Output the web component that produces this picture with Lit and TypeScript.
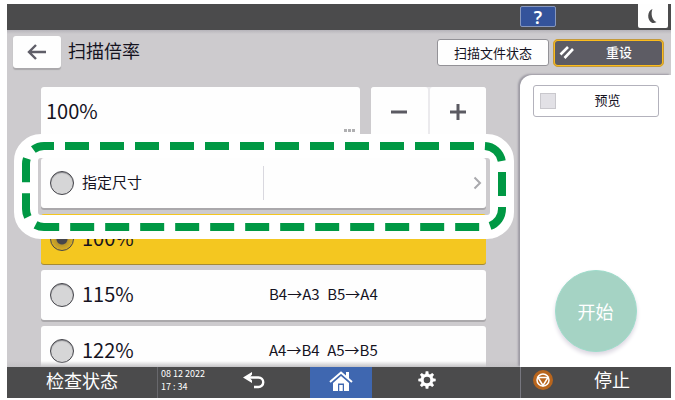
import { LitElement, html, css, svg, nothing } from "lit";
import { customElement, property } from "lit/decorators.js";

interface Ratio {
  label: string;
  note?: string;
  more?: boolean;
  checked?: boolean;
}

const RATIOS: Ratio[] = [
  { label: "指定尺寸", more: true },
  { label: "100%", checked: true },
  { label: "115%", note: "B4→A3\u2002B5→A4" },
  { label: "122%", note: "A4→B4\u2002A5→B5" },
];

const GEAR_TEETH = [0, 45, 90, 135, 180, 225, 270, 315];

@customElement("ratio-row")
export class RatioRow extends LitElement {
  @property({ attribute: false }) ratio!: Ratio;

  static styles = css`
    :host {
      display: block;
    }
    .row {
      box-sizing: border-box;
      display: grid;
      grid-template-columns: 222px 1fr auto;
      align-items: center;
      height: 50px;
      padding-right: 4px;
      border-radius: 3px;
      background: #fefefe;
      box-shadow: 0 2px 0 #aaa8ab;
      color: #15131f;
    }
    .selected {
      background: #f4c720;
      box-shadow: 0 1px 0 #a48a35;
    }
    .main {
      display: flex;
      align-items: center;
      gap: 8px;
      padding-left: 9px;
    }
    .radio {
      appearance: none;
      box-sizing: border-box;
      flex: none;
      width: 24px;
      height: 24px;
      margin: 0;
      border: 1px solid #45454b;
      border-radius: 50%;
      background: #d6d6d7;
      box-shadow: inset 0 1px 1px #8a8a8e;
    }
    .radio:checked {
      background: radial-gradient(circle, #45454b 5px, #b8952c 6px, #d8ae22 11px);
    }
    .number,
    .name,
    .note {
      padding-bottom: 2px;
      line-height: 24px;
    }
    .number {
      font-size: 20px;
    }
    .name {
      font-size: 15px;
    }
    .note {
      padding-left: 6px;
      font-size: 15px;
      white-space: pre;
    }
    .divided {
      height: 34px;
      padding: 0;
      border-left: 1px solid #d9d8df;
    }
    .chevron {
      display: block;
      width: 9px;
      height: 14px;
    }
  `;

  render() {
    const r = this.ratio;
    return html`
      <label class="row ${r.checked ? "selected" : ""}">
        <span class="main">
          <input class="radio" type="radio" name="ratio" .checked=${!!r.checked} />
          <span class=${r.more ? "name" : "number"}>${r.label}</span>
        </span>
        <span class="note ${r.more ? "divided" : ""}">${r.note ?? ""}</span>
        ${r.more
          ? html`<svg class="chevron" viewBox="0 0 9 14" aria-hidden="true">
              <path d="M1.5 1.5L7 7L1.5 12.5" fill="none" stroke="#a9a9ad" stroke-width="2" />
            </svg>`
          : nothing}
      </label>
    `;
  }
}

@customElement("app-root")
export class AppRoot extends LitElement {
  static styles = css`
    :host {
      box-sizing: border-box;
      display: flex;
      flex-direction: column;
      height: 100vh;
      padding: 4px 4px 2px 7px;
      overflow: hidden;
      background: #fff;
      color: #15131f;
      font-family: "Noto Sans CJK SC", sans-serif;
      font-size: 16px;
    }
    button {
      box-sizing: border-box;
      display: flex;
      align-items: center;
      justify-content: center;
      margin: 0;
      padding: 0;
      border: 0;
      background: #fefefe;
      color: inherit;
      font: inherit;
    }
    svg {
      display: block;
      flex: none;
    }
    .status {
      display: flex;
      flex: none;
      justify-content: flex-end;
      align-items: flex-start;
      gap: 82px;
      height: 26px;
      padding-right: 3px;
      background: #4b4b4c;
    }
    .help {
      width: 36px;
      height: 21px;
      margin-top: 2px;
      border: 1px solid #8797bd;
      border-radius: 2px;
      background: #34539b;
      color: #fff;
      font: 600 18px/18px "Noto Sans", sans-serif;
    }
    .sleep {
      width: 30px;
      height: 24px;
      border-radius: 0 0 2px 2px;
    }
    .header {
      display: flex;
      flex: none;
      align-items: center;
      height: 45px;
      padding: 0 7px 0 6px;
      background: linear-gradient(#b6b4ba, #cdcbce 4px);
    }
    .back {
      width: 48px;
      height: 32px;
      margin-bottom: 2px;
      border-radius: 3px;
      box-shadow: 0 2px 1px #aaa8ab;
    }
    .title {
      flex: 1;
      margin: 0;
      padding: 0 0 6px 7px;
      font-size: 18px;
      font-weight: 400;
      line-height: 26px;
    }
    .files {
      width: 112px;
      height: 27px;
      margin-right: 4px;
      border: 1px solid #939297;
      border-radius: 3px;
      font-size: 13px;
    }
    .reset {
      justify-content: flex-start;
      gap: 32px;
      width: 111px;
      height: 28px;
      padding-left: 4px;
      border: 2px solid #fcbc1c;
      border-radius: 5px;
      background: #5d5c64;
      color: #fff;
      font-size: 13px;
      font-weight: 500;
      outline: 1px solid #c39a3c;
      outline-offset: -1px;
    }
    .body {
      display: grid;
      flex: 1;
      grid-template-rows: minmax(0, 1fr);
      grid-template-columns: 1fr 151px;
      min-height: 0;
      background: #cdcbce;
    }
    .settings {
      display: flex;
      flex-direction: column;
      gap: 15px;
      position: relative;
      min-width: 0;
      min-height: 0;
      padding: 12px 34px 0;
      overflow: hidden;
    }
    .settings::after {
      content: "";
      position: absolute;
      right: 0;
      bottom: 0;
      left: 0;
      height: 6px;
      background: linear-gradient(#cdcbce00, #c3c2c5);
    }
    .entry {
      display: flex;
      flex: none;
      gap: 11px;
      height: 56px;
    }
    .value {
      display: flex;
      flex: 1;
      justify-content: space-between;
      padding: 0 5px;
      border-radius: 3px;
      background: #fefefe;
    }
    .amount {
      font-size: 20px;
      line-height: 48px;
    }
    .dots {
      align-self: flex-end;
      padding-bottom: 11px;
    }
    .stepper {
      display: grid;
      grid-template-columns: 1fr 1fr;
      gap: 2px;
      width: 115px;
      border-radius: 3px;
      background: #ebeaed;
    }
    .step {
      padding-bottom: 6px;
      border-radius: 3px;
    }
    .list {
      display: flex;
      flex-direction: column;
      gap: 6px;
    }
    .focus {
      position: relative;
      z-index: 1;
    }
    .ring {
      position: absolute;
      top: -24px;
      left: -27px;
      width: calc(100% + 55px);
      height: 106px;
      pointer-events: none;
    }
    .halo,
    .dash {
      x: 12px;
      y: 12px;
      width: calc(100% - 24px);
      height: 81px;
      fill: none;
    }
    .halo {
      stroke: #fff;
      stroke-width: 24px;
    }
    .dash {
      stroke: #009844;
      stroke-width: 8px;
      stroke-dasharray: 24px 11px;
      stroke-dashoffset: 14px;
    }
    .side {
      display: flex;
      flex-direction: column;
      align-items: center;
      justify-content: space-between;
      position: relative;
      z-index: 1;
      box-sizing: border-box;
      padding: 10px 0 15px;
      border-radius: 12px 0 0 0;
      background: #fff;
      box-shadow: -2px -1px 2px #9c9aa3;
      clip-path: inset(-3px 0 0 -5px);
    }
    .preview {
      box-sizing: border-box;
      display: flex;
      align-items: center;
      gap: 39px;
      width: 126px;
      height: 32px;
      padding: 0 0 1px 6px;
      border: 1px solid #b3b2bc;
      border-radius: 3px;
      font-size: 13px;
      line-height: 18px;
    }
    .caption {
      padding-bottom: 2px;
    }
    .check {
      appearance: none;
      box-sizing: border-box;
      width: 16px;
      height: 16px;
      margin: 0;
      border: 1px solid #c9c8cd;
      background: #e2e1e6;
    }
    .start {
      width: 82px;
      height: 82px;
      border: 1px solid #9fdccb;
      border-radius: 50%;
      background: #a5d3c4;
      box-shadow: 0 3px 4px #dcd8e2;
      color: #fff;
      font-size: 18px;
    }
    .footer {
      display: grid;
      flex: none;
      grid-template-rows: minmax(0, 1fr);
      grid-template-columns: 150px 57px 96px 62px 110px 1fr 151px;
      height: 31px;
      background: #4b4b4c;
      color: #fff;
    }
    .footer button {
      background: none;
      line-height: 22px;
    }
    .footer .job {
      padding-bottom: 6px;
      font-size: 18px;
    }
    .footer .home {
      padding-bottom: 4px;
      background: #3f67b0;
    }
    .clock {
      display: flex;
      flex-direction: column;
      padding-left: 3px;
      border-left: 1px solid #68686c;
      font-size: 9px;
      line-height: 13px;
      white-space: nowrap;
    }
    .footer .nav {
      padding-bottom: 5px;
    }
    .footer .undo {
      padding-right: 16px;
    }
    .footer .stop {
      grid-column: 7;
      justify-content: flex-start;
      gap: 41px;
      padding: 0 0 5px 12px;
      border-left: 1px solid #77777f;
      font-size: 18px;
    }
  `;

  render() {
    return html`
      <header class="status">
        <button class="help">?</button>
        <button class="sleep" aria-label="睡眠">
          <svg width="12" height="16" viewBox="0 0 12 16">
            <path d="M5.500 1C0 3 0 12 4.500 14.500C6 15.400 8 15 9.500 14C5 12.500 3.500 5.500 5.500 1Z" fill="#4b4b4c" />
          </svg>
        </button>
      </header>

      <div class="header">
        <button class="back" aria-label="返回">
          <svg width="20" height="16" viewBox="0 0 20 16">
            <path d="M9 1L2 8L9 15M2 8H19" fill="none" stroke="#5f5e68" stroke-width="2.400" />
          </svg>
        </button>
        <h1 class="title">扫描倍率</h1>
        <button class="files">扫描文件状态</button>
        <button class="reset">
          <svg width="15" height="13" viewBox="0 0 15 13">
            <path d="M1.500 8.500L9 1M5.500 12L14 3" fill="none" stroke="#fff" stroke-width="2.600" />
          </svg>
          <span class="caption">重设</span>
        </button>
      </div>

      <main class="body">
        <section class="settings">
          <div class="entry">
            <div class="value">
              <span class="amount">100%</span>
              <svg class="dots" width="11" height="3" viewBox="0 0 11 3">
                <path d="M0 0h3v3h-3zM4 0h3v3h-3zM8 0h3v3h-3z" fill="#b0b0b2" />
              </svg>
            </div>
            <div class="stepper">
              <button class="step" aria-label="减">
                <svg width="16" height="16" viewBox="0 0 16 16">
                  <path d="M0 8H16" stroke="#5b5a62" stroke-width="3" />
                </svg>
              </button>
              <button class="step" aria-label="加">
                <svg width="16" height="16" viewBox="0 0 16 16">
                  <path d="M0 8H16M8 0V16" stroke="#5b5a62" stroke-width="3" />
                </svg>
              </button>
            </div>
          </div>
          <div class="list">
            ${RATIOS.map((r) =>
              r.more
                ? html`<div class="focus">
                    <ratio-row .ratio=${r}></ratio-row>
                    <svg class="ring" aria-hidden="true">
                      <rect class="halo" rx="15" />
                      <rect class="dash" rx="18" />
                    </svg>
                  </div>`
                : html`<ratio-row .ratio=${r}></ratio-row>`,
            )}
          </div>
        </section>

        <aside class="side">
          <label class="preview">
            <input class="check" type="checkbox" />
            <span class="caption">预览</span>
          </label>
          <button class="start">开始</button>
        </aside>
      </main>

      <footer class="footer">
        <button class="job">检查状态</button>
        <div class="clock"><span>08 12 2022</span><span>17 : 34</span></div>
        <button class="nav undo" aria-label="后退">
          <svg width="22" height="17" viewBox="0 0 22 17">
            <path d="M6 5.500H15.500A4.700 4.700 0 0 1 15.500 15H11" fill="none" stroke="#fff" stroke-width="2.400" />
            <path d="M0 5.500L9 0V2.500L6.500 5.500L9 8.500V11Z" fill="#fff" />
          </svg>
        </button>
        <button class="home" aria-label="主页">
          <svg width="24" height="20" viewBox="0 0 24 20">
            <path d="M1 11L12 1.500L23 11" fill="none" stroke="#fff" stroke-width="2" />
            <path d="M17 1H20V8L17 5Z" fill="#fff" />
            <path d="M12 5L20 12V20H4V12ZM9 12.500V20H10.500V14H13.500V20H15V12.500Z" fill="#fff" fill-rule="evenodd" />
            <path d="M10.500 14H13.500V20H10.500Z" fill="#fff" />
          </svg>
        </button>
        <button class="nav" aria-label="设置">
          <svg width="18" height="18" viewBox="-9 -9 18 18">
            <circle r="4.800" fill="none" stroke="#fff" stroke-width="3" />
            ${GEAR_TEETH.map(
              (a) => svg`<path d="M-1.800 -5.500L-1.300 -8.700H1.300L1.800 -5.500Z" fill="#fff" transform="rotate(${a})" />`,
            )}
          </svg>
        </button>
        <button class="stop">
          <svg width="20" height="20" viewBox="-10 -10 20 20">
            <circle r="10" fill="#b8651d" />
            <circle r="6" fill="none" stroke="#fff" stroke-width="1.500" />
            <path d="M-5 -2.500H5L0 5.500Z" fill="#b8651d" stroke="#fff" stroke-width="1.500" />
          </svg>
          <span class="caption">停止</span>
        </button>
      </footer>
    `;
  }
}
